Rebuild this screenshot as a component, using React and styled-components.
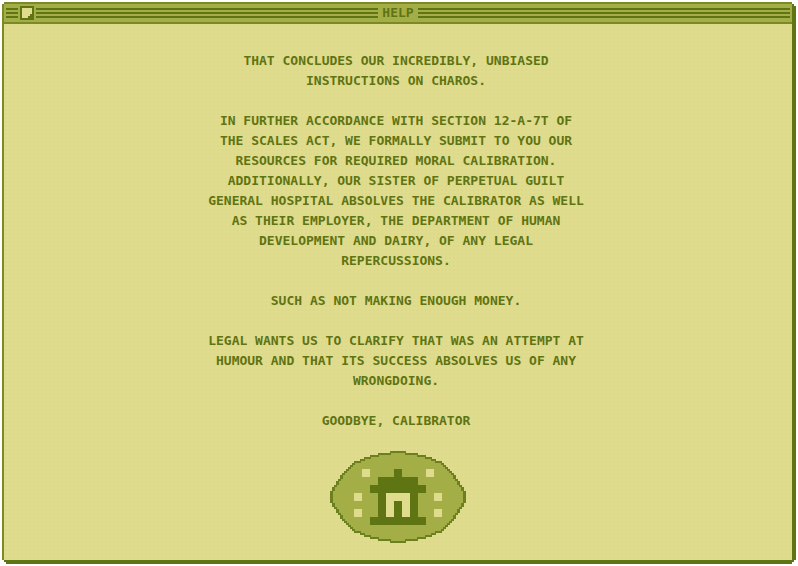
import React from "react";
import styled, { createGlobalStyle, ThemeProvider } from "styled-components";

const theme = {
  paper: "#dfdc8e",
  olive: "#a4ae46",
  line: "#7a8b26",
  dark: "#5f7412",
  mono: '"DejaVu Sans Mono", "Liberation Mono", monospace',
};

const GlobalStyle = createGlobalStyle`
  * { box-sizing: border-box; }
  body { margin: 0; background: #fff; }
`;

const Desktop = styled.div`
  display: flex;
  min-height: 100vh;
  padding: 2px;
`;

const Window = styled.section`
  flex: 1;
  display: flex;
  flex-direction: column;
  border: 2px solid ${({ theme }) => theme.line};
  border-right: 4px solid ${({ theme }) => theme.dark};
  border-bottom: 4px solid ${({ theme }) => theme.dark};
  background-color: ${({ theme }) => theme.paper};
  background-image: radial-gradient(rgba(150, 150, 50, 0.05) 1px, transparent 1px);
  background-size: 4px 4px;
  color: ${({ theme }) => theme.dark};
  font: bold 13px/20px ${({ theme }) => theme.mono};
  clip-path: polygon(
    2px 0, calc(100% - 4px) 0, calc(100% - 4px) 2px, calc(100% - 2px) 2px,
    calc(100% - 2px) 4px, 100% 4px, 100% calc(100% - 4px),
    calc(100% - 2px) calc(100% - 4px), calc(100% - 2px) calc(100% - 2px),
    calc(100% - 4px) calc(100% - 2px), calc(100% - 4px) 100%, 4px 100%,
    4px calc(100% - 2px), 2px calc(100% - 2px), 2px calc(100% - 4px),
    0 calc(100% - 4px), 0 2px, 2px 2px
  );
`;

const TitleBar = styled.header`
  display: flex;
  align-items: center;
  gap: 2px;
  height: 20px;
  padding: 0 2px;
  background: ${({ theme }) => theme.olive};
  border-bottom: 2px solid ${({ theme }) => theme.line};
`;

const BarSide = styled.div`
  flex: 1;
  display: flex;
  align-items: center;
  gap: 2px;
`;

const Stripes = styled.span`
  flex: ${({ $short }) => ($short ? "0 0 12px" : "1")};
  height: 10px;
  background: repeating-linear-gradient(
    ${({ theme }) => theme.dark} 0 2px,
    ${({ theme }) => theme.olive} 2px 4px
  );
`;

const MenuButton = styled.button`
  display: block;
  width: 14px;
  height: 14px;
  padding: 0;
  border: 0;
  background: none;

  svg { display: block; }
`;

const Title = styled.h1`
  margin: 0;
  padding: 0 2px;
  font-size: 13px;
  line-height: 18px;
`;

const Content = styled.main`
  flex: 1;
  display: flex;
  flex-direction: column;
  align-items: center;
  padding: 27px 8px 16px;
`;

const Letter = styled.article`
  display: grid;
  gap: 20px;
  max-width: 384px;
  padding-right: 4px;
  text-align: center;
  text-transform: uppercase;
`;

const Paragraph = styled.p`
  margin: 0;
`;

const Seal = styled.svg`
  display: block;
  margin-top: 20px;
`;

const halfWidths = [
  8, 20, 28, 34, 38, 44, 46, 48, 50, 52, 54, 56, 58, 58, 60, 62, 62, 64, 66, 66,
  68, 68, 68,
];
const innerWidths = halfWidths.map((w, i) =>
  i === 0 ? 0 : Math.min(w - 3, halfWidths[i - 1] - 1)
);

function ovalPath(widths) {
  const rows = [...widths, ...[...widths].reverse()];
  return rows
    .map((w, i) => (w ? `M${68 - w} ${i * 2}h${w * 2}v2h${-w * 2}z` : ""))
    .join("");
}

const lights = [[32, 18], [96, 18], [24, 42], [104, 42], [24, 58], [104, 58]];

function HouseSeal() {
  return (
    <Seal width="136" height="92" viewBox="0 0 136 92" shapeRendering="crispEdges" role="img" aria-label="House seal">
      <path d={ovalPath(halfWidths)} fill="#6d8020" />
      <path d={ovalPath(innerWidths)} fill={theme.olive} />
      {lights.map(([x, y]) => (
        <rect key={`${x}-${y}`} x={x} y={y} width="8" height="8" fill={theme.paper} />
      ))}
      <path d="M64 18h8v8h16v8h8v8h-8v24h8v8H40v-8h8V42h-8v-8h8v-8h16z" fill={theme.dark} />
      <path d="M56 42h24v24h-8V50h-8v16h-8z" fill={theme.paper} />
    </Seal>
  );
}

const paragraphs = [
  "That concludes our incredibly, unbiased instructions on Charos.",
  "In further accordance with Section 12-A-7T of the Scales Act, we formally submit to you our resources for required moral calibration. Additionally, Our Sister of Perpetual Guilt General Hospital absolves the calibrator as well as their employer, the Department of Human Development and Dairy, of any legal repercussions.",
  "Such as not making enough money.",
  "Legal wants us to clarify that was an attempt at humour and that its success absolves us of any wrongdoing.",
  "Goodbye, Calibrator",
];

export default function App() {
  return (
    <ThemeProvider theme={theme}>
      <GlobalStyle />
      <Desktop>
        <Window>
          <TitleBar>
            <BarSide>
              <Stripes $short />
              <MenuButton type="button" aria-label="Window menu">
                <svg width="14" height="14" viewBox="0 0 14 14" shapeRendering="crispEdges" aria-hidden="true">
                  <path d="M0 0h14v14H0z" fill={theme.dark} />
                  <path d="M2 2h10v6h-2v2H8v2H2z" fill={theme.paper} />
                </svg>
              </MenuButton>
              <Stripes />
            </BarSide>
            <Title>HELP</Title>
            <BarSide>
              <Stripes />
            </BarSide>
          </TitleBar>
          <Content>
            <Letter>
              {paragraphs.map((text) => (
                <Paragraph key={text}>{text}</Paragraph>
              ))}
            </Letter>
            <HouseSeal />
          </Content>
        </Window>
      </Desktop>
    </ThemeProvider>
  );
}
